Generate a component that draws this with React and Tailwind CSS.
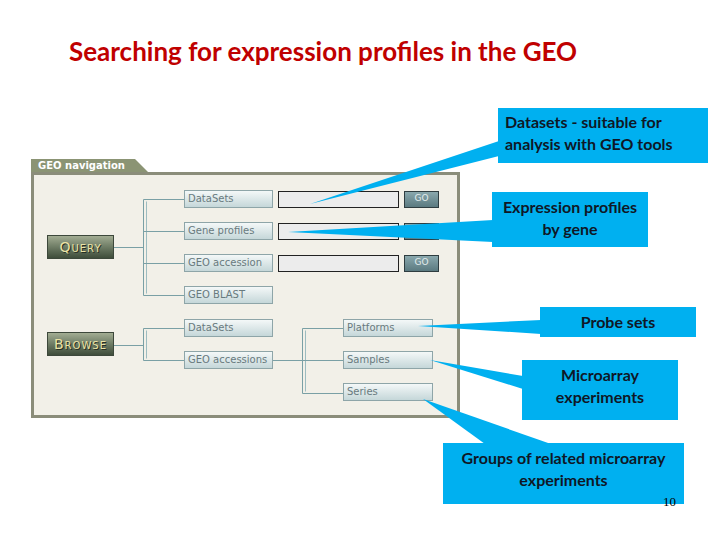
import React from "react";

const sans = "font-['DejaVu_Sans',sans-serif]";
const cal = "font-['Lato','Open_Sans',sans-serif]";

function Item({ label, w = "w-[89px]" }) {
  return (
    <div
      className={`${w} h-[18px] shrink-0 border border-[#8ea5a8] bg-linear-to-b from-[#f4f8f8] to-[#c5d7d9] pl-[3px] text-[10px] leading-[16px] text-[#687a7e] whitespace-nowrap ${sans}`}
    >
      {label}
    </div>
  );
}

function Nav({ first, rest }) {
  return (
    <div className="w-[67px] h-[24px] shrink-0 border border-[#3d483b] bg-linear-to-b from-[#a3ad93] via-[#6e7c65] to-[#3f4d3b] flex items-center justify-center">
      <span
        className={`text-[#ebe3a6] tracking-[1px] [text-shadow:1px_1px_0_#262e24] ${sans}`}
      >
        <span className="text-[14px]">{first}</span>
        <span className="text-[10px]">{rest}</span>
      </span>
    </div>
  );
}

function Tree({ h, mid, rows }) {
  const c = "#7aa0a5";
  const top = rows[0] + 0.5;
  const bot = rows[rows.length - 1] + 0.5;
  return (
    <svg width="70" height={h} className="shrink-0 block">
      <line x1="0" y1={mid + 0.5} x2="30" y2={mid + 0.5} stroke={c} />
      <line x1="29.5" y1={top} x2="29.5" y2={bot} stroke={c} />
      <line x1="32.5" y1={top + 2} x2="32.5" y2={bot - 2} stroke="#9dbcc0" />
      {rows.map((y) => (
        <line key={y} x1="29.5" y1={y + 0.5} x2="70" y2={y + 0.5} stroke={c} />
      ))}
    </svg>
  );
}

function SearchRow({ label }) {
  return (
    <div className="flex items-center">
      <Item label={label} />
      <div className="ml-[5px] w-[121px] h-[17px] border border-[#222] bg-[#ececec]" />
      <div
        className={`ml-[5px] w-[35px] h-[17px] border border-[#2f3d40] bg-linear-to-b from-[#8aa8ad] to-[#5b7a80] flex items-center justify-center text-[9px] text-[#e2ebec] ${sans}`}
      >
        GO
      </div>
    </div>
  );
}

const box = `bg-[#00b0f0] text-[#0f1726] font-bold text-[16px] leading-[22px] ${cal}`;

export default function App() {
  return (
    <div className="relative w-[720px] h-[540px] bg-white overflow-hidden flex flex-col">
      <h1
        className={`pl-[69px] pt-[36px] text-[26px] leading-[30px] font-bold text-[#c00000] ${cal}`}
      >
        Searching for expression profiles in the GEO
      </h1>

      <div className="mt-[42px] flex items-start">
        {/* GEO navigation panel */}
        <div className="ml-[31px] mt-[51px] w-[429px]">
          <div
            className={`h-[13px] w-[117px] bg-[#8b9474] [clip-path:polygon(0_0,104px_0,117px_100%,0_100%)] pl-[7px] text-[10px] leading-[13px] font-bold text-white ${sans}`}
          >
            GEO navigation
          </div>
          <div className="h-[246px] border-[3px] border-[#8b8d7a] bg-[#f2f0e8] pl-[13px] pt-[15px]">
            <div className="flex items-center">
              <Nav first="Q" rest="UERY" />
              <Tree h={114} mid={57} rows={[9, 41, 73, 105]} />
              <div className="flex flex-col gap-[14px]">
                <SearchRow label="DataSets" />
                <SearchRow label="Gene profiles" />
                <SearchRow label="GEO accession" />
                <Item label="GEO BLAST" />
              </div>
            </div>

            <div className="mt-[15px] flex items-start">
              <div className="flex items-center">
                <Nav first="B" rest="ROWSE" />
                <Tree h={50} mid={26} rows={[9, 41]} />
                <div className="flex flex-col gap-[14px]">
                  <Item label="DataSets" />
                  <Item label="GEO accessions" />
                </div>
              </div>
              <Tree h={83} mid={41} rows={[9, 41, 74]} />
              <div className="flex flex-col gap-[14px]">
                <Item label="Platforms" w="w-[90px]" />
                <Item label="Samples" w="w-[90px]" />
                <Item label="Series" w="w-[90px]" />
              </div>
            </div>
          </div>
        </div>

        {/* callouts */}
        <div className="ml-[32px] flex flex-col items-start">
          <div className={`ml-[6px] w-[210px] h-[55px] pl-[7px] pt-[3px] ${box}`}>
            Datasets - suitable for
            <br />
            analysis with GEO tools
          </div>
          <div className={`mt-[29px] w-[156px] h-[55px] pt-[4px] text-center ${box}`}>
            Expression profiles
            <br />
            by gene
          </div>
          <div
            className={`mt-[60px] ml-[48px] w-[156px] h-[30px] flex items-center justify-center ${box}`}
          >
            Probe sets
          </div>
          <div className={`mt-[23px] ml-[30px] w-[156px] h-[60px] pt-[4px] text-center ${box}`}>
            Microarray
            <br />
            experiments
          </div>
        </div>
      </div>

      <div className={`mt-[23px] ml-[443px] w-[241px] h-[61px] pt-[4px] text-center ${box}`}>
        Groups of related microarray
        <br />
        experiments
      </div>

      {/* callout pointers */}
      <svg
        className="absolute left-0 top-0 pointer-events-none"
        width="720"
        height="540"
      >
        <g fill="#00b0f0">
          <polygon points="310,204 499,141 499,156" />
          <polygon points="288,232 493,220 493,242" />
          <polygon points="418,326 541,320 541,334" />
          <polygon points="430,360 523,376 523,389" />
          <polygon points="423,399 485,444 551,444" />
        </g>
      </svg>

      <div className="absolute left-[663px] top-[494px] text-[13px] leading-[16px] text-black font-['Liberation_Serif',serif]">
        10
      </div>
    </div>
  );
}
